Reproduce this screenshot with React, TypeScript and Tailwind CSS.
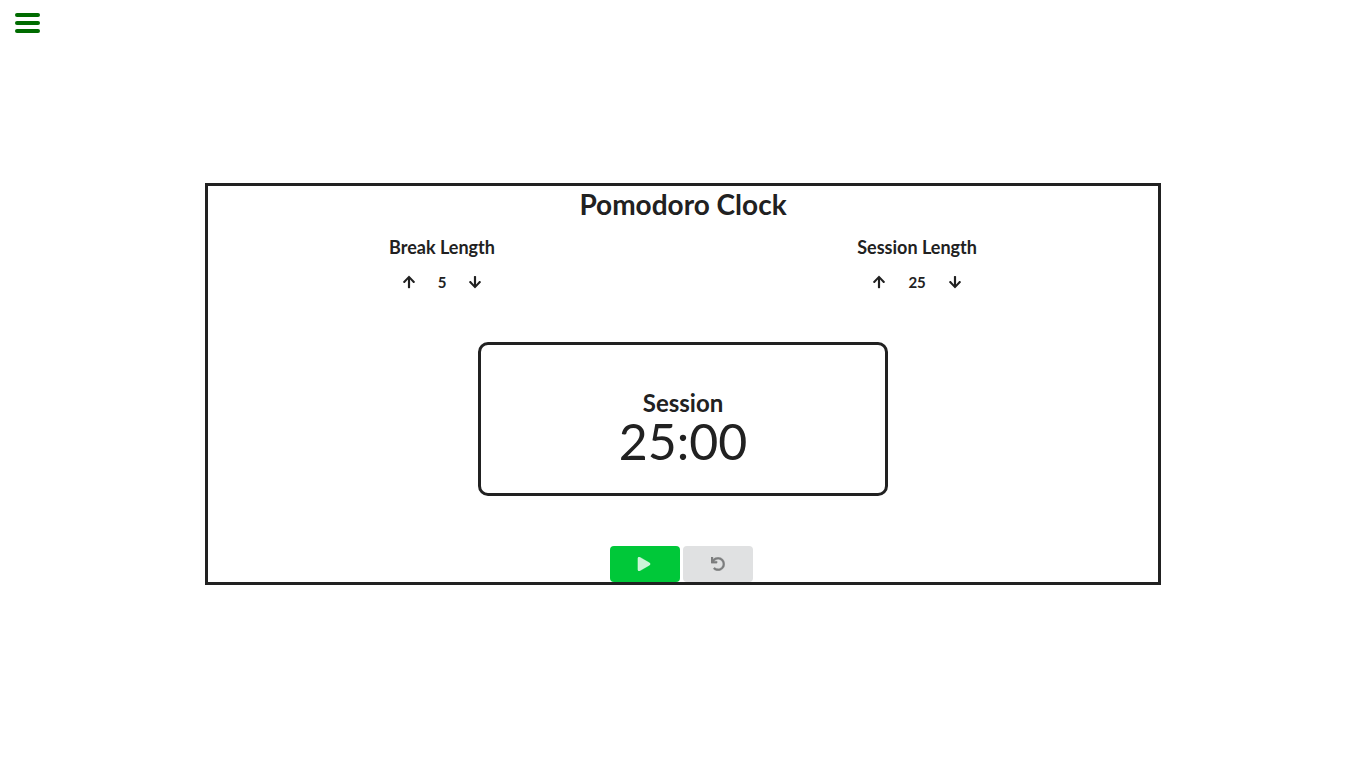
import { FaArrowUp, FaArrowDown, FaPlay, FaUndo } from "react-icons/fa";
import { useState } from "react";

type LengthProps = { title: string; value: number; onChange: (value: number) => void };

function LengthControl({ title, value, onChange }: LengthProps) {
  return (
    <section className="flex flex-col items-center">
      <h2 className="text-[18px] leading-6 font-bold">{title}</h2>
      <div className="mt-[11px] flex h-6 items-center gap-[22px] text-[15px] font-bold">
        <button type="button" aria-label={`Increase ${title}`} onClick={() => onChange(value + 1)}>
          <FaArrowUp size={14} />
        </button>
        <span>{value}</span>
        <button type="button" aria-label={`Decrease ${title}`} onClick={() => onChange(Math.max(1, value - 1))}>
          <FaArrowDown size={14} />
        </button>
      </div>
    </section>
  );
}

export default function App() {
  const [breakLength, setBreakLength] = useState(5);
  const [sessionLength, setSessionLength] = useState(25);

  return (
    <div className="flex min-h-screen flex-col bg-white font-['Lato',sans-serif] text-[#212121]">
      <header className="h-0">
        <button type="button" aria-label="Open menu" className="ml-[15px] mt-[13px] flex w-[25px] flex-col gap-1">
          <span className="h-1 w-full rounded-sm bg-[#006b00]" />
          <span className="h-1 w-full rounded-sm bg-[#006b00]" />
          <span className="h-1 w-full rounded-sm bg-[#006b00]" />
        </button>
      </header>
      <main className="flex flex-1 flex-col items-center justify-center">
        <div className="flex w-[70%] flex-col items-center border-3 border-[#212121]">
          <h1 className="text-[28px] leading-9 font-bold">Pomodoro Clock</h1>
          <div className="mt-[13px] flex w-full justify-around">
            <LengthControl title="Break Length" value={breakLength} onChange={setBreakLength} />
            <LengthControl title="Session Length" value={sessionLength} onChange={setSessionLength} />
          </div>
          <section className="mt-12 flex h-[154px] w-[410px] flex-col items-center justify-center rounded-[10px] border-3 border-[#212121] pt-3">
            <h2 className="pt-1.5 text-[24px] leading-[26px] font-bold">Session</h2>
            <time className="text-[50px] leading-[50px]">{sessionLength}:00</time>
          </section>
          <div className="mt-[50px] flex gap-[3px] pr-[3px]">
            <button type="button" aria-label="Start" className="flex h-9 w-[70px] items-center justify-center rounded bg-[#00c839] pr-0.5 text-white/80">
              <FaPlay size={14} strokeWidth={12} />
            </button>
            <button type="button" aria-label="Reset" className="flex h-9 w-[70px] items-center justify-center rounded bg-[#e0e1e2] text-[#7c7d7e]">
              <FaUndo size={14} strokeWidth={12} />
            </button>
          </div>
        </div>
      </main>
    </div>
  );
}
